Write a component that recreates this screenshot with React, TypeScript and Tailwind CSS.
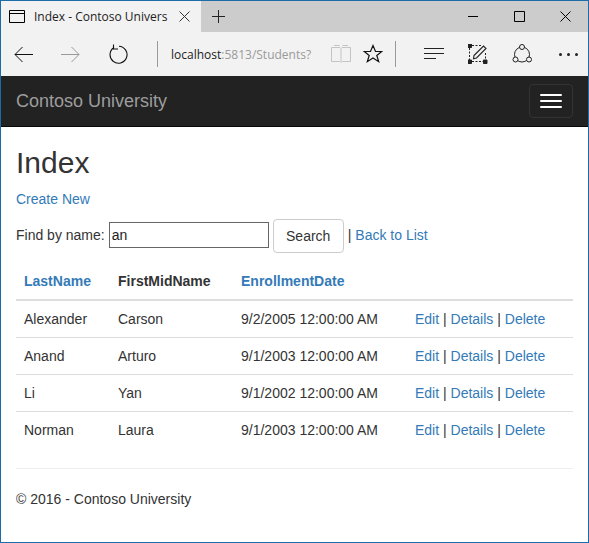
const F = "font-['Liberation_Sans',Arial,sans-serif]";
const rows = [
  ["Alexander", "Carson", "9/2/2005 12:00:00 AM"],
  ["Anand", "Arturo", "9/1/2003 12:00:00 AM"],
  ["Li", "Yan", "9/1/2002 12:00:00 AM"],
  ["Norman", "Laura", "9/1/2003 12:00:00 AM"],
];
const S = { fill: "none", stroke: "currentColor", strokeWidth: 1 } as const;

function Ic({ w, h, children, cls = "" }: { w: number; h: number; children: React.ReactNode; cls?: string }) {
  return (
    <svg width={w} height={h} viewBox={`0 0 ${w} ${h}`} className={`shrink-0 block ${cls}`} {...S}>
      {children}
    </svg>
  );
}

export default function App() {
  return (
    <div className={`${F} w-[589px] h-[543px] border border-[#1b6ca8] bg-white text-[14px] leading-[20px] text-[#333] overflow-hidden flex flex-col`}>
      {/* tab strip */}
      <div className="h-[31px] shrink-0 bg-[#cccccc] flex text-black">
        <div className="w-[200px] bg-[#f2f2f2] flex items-center pl-[8px]">
          <Ic w={17} h={14}><path d="M.5.5h15v12H.5zM.5 3.5h15" /></Ic>
          <span className="ml-[8px] w-[135px] overflow-hidden whitespace-nowrap font-['Open_Sans',sans-serif] text-[12px] text-[#222]">Index - Contoso Univers</span>
          <Ic w={11} h={11} cls="ml-[10px] text-[#333]"><path d="M.5.5l10 10M10.5.5l-10 10" /></Ic>
        </div>
        <div className="flex items-center pl-[11px]">
          <Ic w={13} h={13} cls="text-[#222]"><path d="M6.5 0v13M0 6.5h13" /></Ic>
        </div>
        <div className="ml-auto flex items-center text-black">
          <Ic w={11} h={11} cls="mr-[35px]"><path d="M0 5.5h10" /></Ic>
          <Ic w={11} h={11} cls="mr-[35px]"><path d="M.5.5h10v10h-10z" /></Ic>
          <Ic w={11} h={11} cls="mr-[17px]"><path d="M.5.5l10 10M10.5.5l-10 10" /></Ic>
        </div>
      </div>
      {/* toolbar */}
      <div className="h-[44px] shrink-0 bg-[#f2f2f2] flex items-center text-black">
        <Ic w={20} h={17} cls="ml-[13px] text-[#111]"><path d="M19 8.5H1M8.5 1L1 8.5 8.5 16" /></Ic>
        <Ic w={20} h={17} cls="ml-[27px] text-[#9a9a9a]"><path d="M0 8.5h18M10.5 1L18 8.5 10.5 16" /></Ic>
        <Ic w={20} h={20} cls="ml-[27px] text-[#111]"><path d="M6 3.5A8.5 8.5 0 1 0 11 2.2M5.5 .5v4.5h4.5" strokeWidth="1.1" /></Ic>
        <div className="ml-[29px] w-px h-[26px] bg-[#9a9a9a]" />
        <div className="ml-[13px] pt-[2px] w-[153px] overflow-hidden whitespace-nowrap font-['Open_Sans',sans-serif] text-[12px] text-[#9a9a9a]">
          <span className="text-[#222]">localhost</span>:5813/Students?
        </div>
        <Ic w={20} h={18} cls="ml-[7px] text-[#c4c4c4]"><path d="M.5 2.5h8.5l1 1 1-1h8.5v14h-8.5l-1 1-1-1H.5zM10 3.5v13M3 .5h5.5M11.5 .5H17" /></Ic>
        <Ic w={20} h={20} cls="ml-[12px] text-[#111]"><path d="M10 1.5l2.5 6h6.3l-5 4 1.9 6.2L10 14l-5.7 3.7 1.9-6.2-5-4h6.3z" strokeWidth="1.2" /></Ic>
        <div className="ml-[12px] w-px h-[26px] bg-[#9a9a9a]" />
        <Ic w={21} h={14} cls="ml-[28px] text-[#222]"><path d="M0 1.5h20M0 6.5h20M0 11.5h12" /></Ic>
        <Ic w={20} h={20} cls="ml-[23px] text-[#222]">
          <path d="M4 1.5h9M1.5 4v12M4 17.5h12M17.5 9v7" strokeDasharray="2 1.5" />
          <path d="M0 0h3.5v3.5H0zM0 16h3.5v3.5H0zM15.5 16H19v3.5h-3.5z" fill="currentColor" />
          <path d="M6 11.5L15.5 2l2.5 2.5L8.5 14l-3 .8z" strokeWidth="1.1" />
        </Ic>
        <Ic w={21} h={20} cls="ml-[24px] text-[#222]">
          <circle cx="10" cy="10.5" r="7.5" />
          <circle cx="10" cy="3" r="2.5" fill="#f2f2f2" />
          <circle cx="3.5" cy="15.5" r="2.5" fill="#f2f2f2" />
          <circle cx="17" cy="15.5" r="2.5" fill="#f2f2f2" />
        </Ic>
        <div className="ml-[26px] flex gap-[5px]">
          <span className="w-[3px] h-[3px] rounded-full bg-[#222]" />
          <span className="w-[3px] h-[3px] rounded-full bg-[#222]" />
          <span className="w-[3px] h-[3px] rounded-full bg-[#222]" />
        </div>
      </div>
      {/* navbar */}
      <div className="h-[51px] shrink-0 bg-[#222222] border-b border-[#080808] flex items-center justify-between pl-[15px] pr-[15px]">
        <span className="text-[18px] leading-[20px] text-[#9d9d9d]">Contoso University</span>
        <div className="w-[44px] h-[34px] border border-[#333] rounded flex flex-col items-center justify-center gap-[4px]">
          <span className="w-[22px] h-[2px] rounded-[1px] bg-white" />
          <span className="w-[22px] h-[2px] rounded-[1px] bg-white" />
          <span className="w-[22px] h-[2px] rounded-[1px] bg-white" />
        </div>
      </div>
      {/* body */}
      <div className="px-[15px]">
        <h2 className="mt-[19px] mb-[10px] text-[30px] leading-[33px] font-medium text-[#333]">Index</h2>
        <p className="mb-[9px]"><a className="text-[#337ab7]">Create New</a></p>
        <div className="flex items-center h-[34px] mb-[11px]">
          <span>Find by name:</span>
          <div className="ml-[4px] w-[160px] h-[26px] border border-[#666] pl-[2px] leading-[24px] text-[#222]">an</div>
          <div className="ml-[4px] mt-[2px] w-[71px] h-[34px] border border-[#ccc] rounded flex items-center justify-center">Search</div>
          <span className="ml-[4px] text-[#333]">|</span>
          <a className="ml-[4px] text-[#337ab7]">Back to List</a>
        </div>
        <table className="w-[557px] border-collapse table-fixed">
          <thead>
            <tr className="border-b-2 border-[#ddd] font-bold text-left">
              <th className="w-[94px] h-[37px] pl-[8px] font-bold text-[#337ab7]">LastName</th>
              <th className="w-[123px] font-bold pl-[8px]">FirstMidName</th>
              <th className="w-[174px] font-bold pl-[8px] text-[#337ab7]">EnrollmentDate</th>
              <th />
            </tr>
          </thead>
          <tbody>
            {rows.map((r, i) => (
              <tr key={r[0]} className={i ? "border-t border-[#ddd]" : ""}>
                <td className="h-[37px] pl-[8px]">{r[0]}</td>
                <td className="pl-[8px]">{r[1]}</td>
                <td className="pl-[8px] whitespace-nowrap">{r[2]}</td>
                <td className="pl-[8px] whitespace-nowrap">
                  <a className="text-[#337ab7]">Edit</a> | <a className="text-[#337ab7]">Details</a> | <a className="text-[#337ab7]">Delete</a>
                </td>
              </tr>
            ))}
          </tbody>
        </table>
        <hr className="mt-[20px] mb-[20px] border-0 border-t border-[#eee]" />
        <p>© 2016 - Contoso University</p>
      </div>
    </div>
  );
}
